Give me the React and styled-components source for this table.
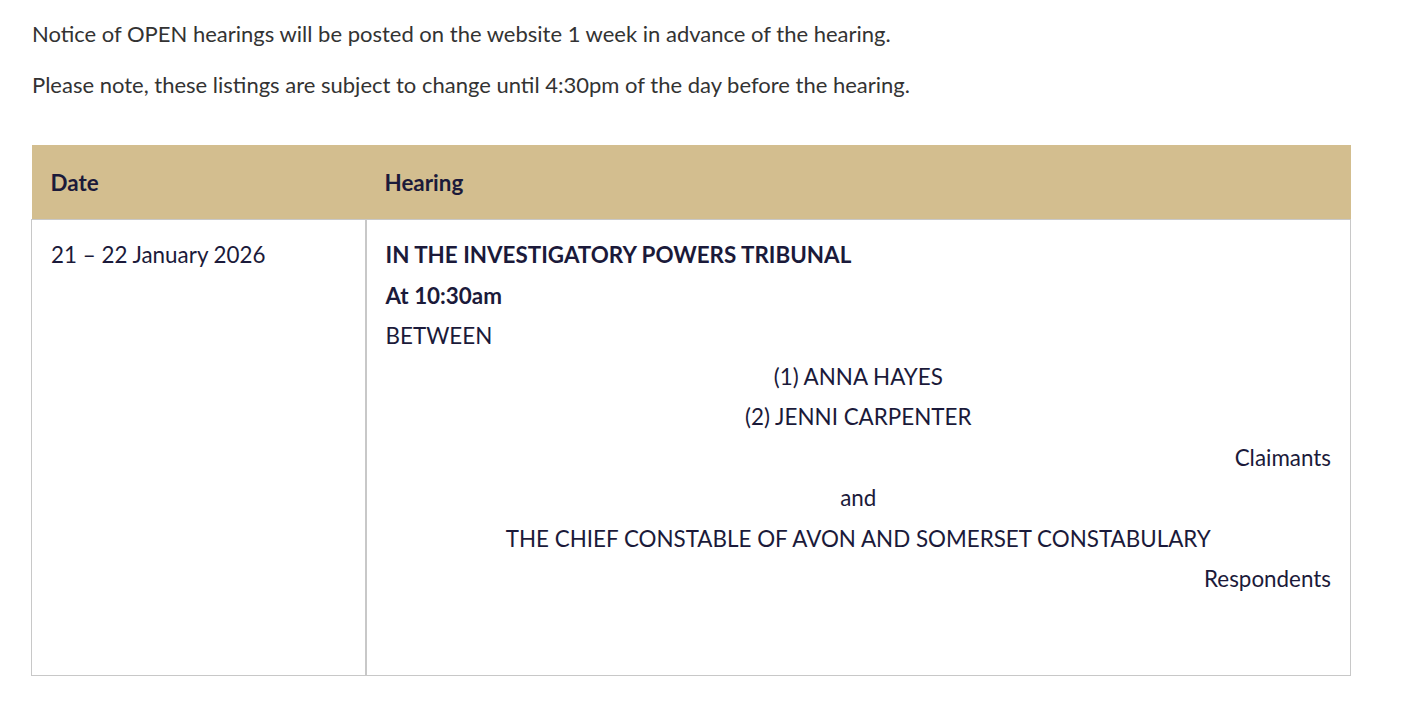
import React from 'react';
import styled, { createGlobalStyle } from 'styled-components';

const GlobalStyle = createGlobalStyle`
    body {
        margin: 0;
        background: #fff;
        font-family: Lato, "Open Sans", sans-serif;
    }
`;

const Page = styled.div`
    padding: 17px 52px 0 31px;
`;

const Intro = styled.p`
    margin: 0 0 17px 1px;
    font-size: 22px;
    line-height: 34px;
    color: #333;
`;

const Table = styled.table`
    width: 1320px;
    margin-top: 43px;
    border-collapse: collapse;
    table-layout: fixed;
    font-size: 22.4px;
    color: #1b1a3a;
`;

const HeadCell = styled.th`
    background: #d3be8f;
    height: 74px;
    padding: 0 19px;
    text-align: left;
    font-weight: 700;
    width: ${props => props.$width || 'auto'};
`;

const Cell = styled.td`
    vertical-align: top;
    border: 1px solid #c8c8c8;
    border-left-width: ${props => (props.$divider ? '2px' : '1px')};
    padding: 15px 19px 75px;
    line-height: 40.5px;
`;

const Line = styled.div`
    text-align: ${props => props.$align || 'left'};
    font-weight: ${props => (props.$bold ? 700 : 400)};
`;

const App = () => {
    return (
        <Page>
            <GlobalStyle />
            <Intro>Notice of OPEN hearings will be posted on the website 1 week in advance of the hearing.</Intro>
            <Intro>Please note, these listings are subject to change until 4:30pm of the day before the hearing.</Intro>
            <Table>
                <thead>
                    <tr>
                        <HeadCell $width="296px">Date</HeadCell>
                        <HeadCell>Hearing</HeadCell>
                    </tr>
                </thead>
                <tbody>
                    <tr>
                        <Cell>21 – 22 January 2026</Cell>
                        <Cell $divider>
                            <Line $bold>IN THE INVESTIGATORY POWERS TRIBUNAL</Line>
                            <Line $bold>At 10:30am</Line>
                            <Line>BETWEEN</Line>
                            <Line $align="center">(1) ANNA HAYES</Line>
                            <Line $align="center">(2) JENNI CARPENTER</Line>
                            <Line $align="right">Claimants</Line>
                            <Line $align="center">and</Line>
                            <Line $align="center">THE CHIEF CONSTABLE OF AVON AND SOMERSET CONSTABULARY</Line>
                            <Line $align="right">Respondents</Line>
                        </Cell>
                    </tr>
                </tbody>
            </Table>
        </Page>
    );
};

export default App;
